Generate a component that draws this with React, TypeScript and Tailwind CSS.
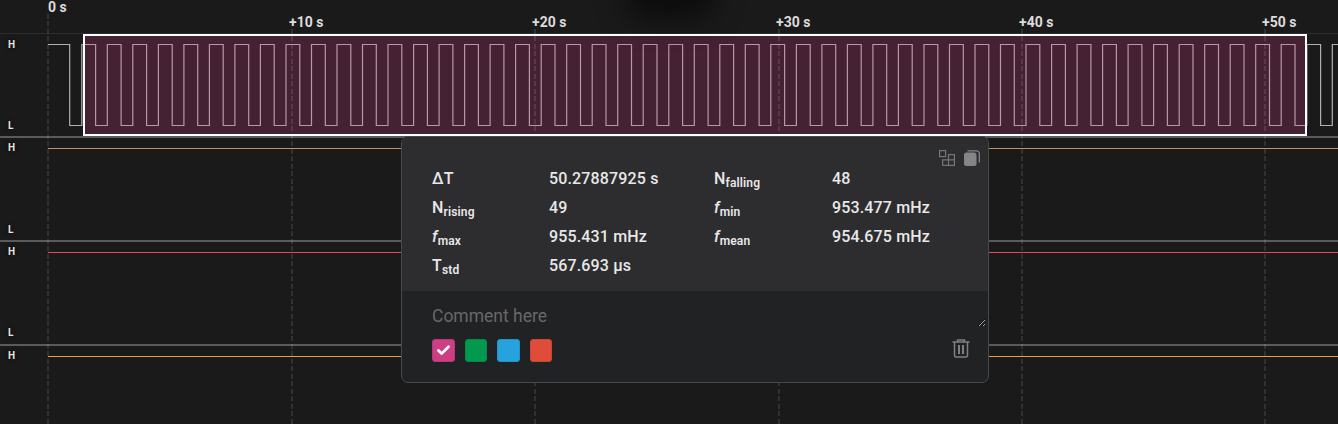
import { Check } from "lucide-react";

const GRID = [
  { x: 48, top: 14, label: "0 s" },
  { x: 292, top: 29, label: "+10 s" },
  { x: 535, top: 29, label: "+20 s" },
  { x: 779, top: 29, label: "+30 s" },
  { x: 1022, top: 29, label: "+40 s" },
  { x: 1265, top: 29, label: "+50 s" },
];

// square wave, coordinates relative to the plot area (starts at x=48)
function wavePath() {
  const hi = 10.5;
  const lo = 91.5;
  const period = 25.52;
  let d = `M0 ${hi} H21.7 V${lo}`;
  for (let i = 0; i < 50; i++) {
    const rise = 33.8 + i * period;
    const fall = 47.6 + i * period;
    d += ` H${rise.toFixed(1)} V${hi} H${fall.toFixed(1)} V${lo}`;
  }
  return d;
}

function Label({ children }: { children: string }) {
  return <span className="text-[10px] leading-[12px] font-bold text-[#e4e4e4] [text-shadow:0_0_4px_#000]">{children}</span>;
}

function Row({ height, lineY, color, low = true, wave = false, pad = "pt-[4px] pb-[5px]", border = true }: { height: string; lineY?: string; color?: string; low?: boolean; wave?: boolean; pad?: string; border?: boolean }) {
  return (
    <div className={`flex w-full ${border ? "border-b-2 border-[#5a5a5e]" : ""} ${height}`}>
      <div className={`flex w-[48px] flex-col justify-between pl-[8px] ${pad}`}>
        <Label>H</Label>
        {low && <Label>L</Label>}
      </div>
      <div className="min-w-0 flex-1">
        {wave ? (
          <svg width="1290" height="102" fill="none">
            <path d={wavePath()} stroke="#b0b0b0" strokeWidth="1.2" />
          </svg>
        ) : (
          <div className={`h-px w-full ${lineY} ${color}`} />
        )}
      </div>
    </div>
  );
}

function Stat({ name, sub, italic, value }: { name: string; sub: string; italic?: boolean; value: string }) {
  return (
    <>
      <div className="flex h-[29px] items-center">
        <span className={`text-[16px] ${italic ? "italic" : ""}`}>{name}</span>
        <span className="mt-[8px] text-[12px] font-semibold leading-none">{sub}</span>
      </div>
      <div className="flex h-[29px] items-center text-[16px]">{value}</div>
    </>
  );
}

function GroupIcon() {
  return (
    <svg width="16" height="16" viewBox="0 0 16 16" fill="none" stroke="#767678" strokeWidth="1.2">
      <rect x="0.6" y="0.6" width="6" height="6" />
      <path d="M3.6 15.4 H15.4 V4.6 H9.5 V15.4 M3.6 15.4 V9.8 H15.4" />
    </svg>
  );
}

function CopyIcon() {
  return (
    <svg width="16" height="16" viewBox="0 0 16 16" fill="none">
      <rect x="0" y="2.5" width="12.5" height="13.5" rx="2.5" fill="#858587" />
      <path d="M3.5 0.8 H12.5 A2.8 2.8 0 0 1 15.3 3.6 V12.5" stroke="#858587" strokeWidth="1.3" />
    </svg>
  );
}

function TrashIcon() {
  return (
    <svg className="-mt-[5px]" width="18" height="19" viewBox="0 0 18 19" fill="none" stroke="#808082" strokeWidth="1.5">
      <path d="M0.5 3 H17.5" />
      <path d="M5.5 3 V1 H12.5 V3" />
      <path d="M2.5 3 V16.5 A1.5 1.5 0 0 0 4 18 H14 A1.5 1.5 0 0 0 15.5 16.5 V3" />
      <path d="M7 6 V15 M11 6 V15" strokeWidth="2" />
    </svg>
  );
}

export default function App() {
  return (
    <div className="relative h-[424px] w-[1338px] overflow-hidden bg-[#1a1a1b] font-['Roboto',sans-serif] text-[#e8e8e8]">
      {/* dark smudge at top */}
      <div className="absolute -top-[30px] left-[625px] h-[50px] w-[90px] rounded-full bg-[#0c0c0c] blur-[14px]" />

      {/* time axis */}
      <div className="h-[34px] border-b border-[#2d2d2f]" />

      <div>
        <Row height="h-[104px]" wave pad="pt-[5px] pb-[4px]" />
        <Row height="h-[104px]" lineY="mt-[10px]" color="bg-[#c98b6e]" pad="pt-[4px] pb-[4px]" />
        <Row height="h-[104px]" lineY="mt-[10px]" color="bg-[#e5485f]" />
        <Row height="h-[78px]" lineY="mt-[10px]" color="bg-[#f39c3d]" low={false} border={false} />
      </div>

      {/* selection */}
      <div className="absolute left-[83px] top-[34px] h-[102px] w-[1224px] border-2 border-white bg-[#da3e8a38]" />

      {/* grid lines and tick labels */}
      {GRID.map((g) => (
        <div key={g.x} className="absolute inset-y-0" style={{ left: g.x }}>
          <div
            className="absolute -left-px bottom-0 w-[2px] bg-[repeating-linear-gradient(to_bottom,rgba(255,255,255,0.1)_0,rgba(255,255,255,0.1)_5px,transparent_5px,transparent_7.5px)]"
            style={{ top: g.top }}
          />
          <span
            className="absolute whitespace-nowrap text-[14px] leading-[14px] font-bold text-[#dcdcdc]"
            style={{ top: g.x === 48 ? 0 : 15, left: g.x === 48 ? 0 : -3 }}
          >
            {g.label}
          </span>
        </div>
      ))}

      {/* measurement popover */}
      <div className="absolute left-[401px] top-[136px] h-[247px] w-[588px] overflow-hidden rounded-[7px] border border-[#48484b] bg-[#212224]">
        <div className="h-[154px] bg-[#2d2d2f]">
          <div className="flex h-[27px] items-start justify-end gap-[9px] pr-[8px] pt-[13px]">
            <GroupIcon />
            <CopyIcon />
          </div>
          <div className="grid grid-cols-[117px_165px_118px_1fr] pl-[30px] font-medium tracking-[0.15px]">
            <Stat name="ΔT" sub="" value="50.27887925 s" />
            <Stat name="N" sub="falling" value="48" />
            <Stat name="N" sub="rising" value="49" />
            <Stat name="f" sub="min" italic value="953.477 mHz" />
            <Stat name="f" sub="max" italic value="955.431 mHz" />
            <Stat name="f" sub="mean" italic value="954.675 mHz" />
            <Stat name="T" sub="std" value="567.693 µs" />
          </div>
        </div>
        <div className="pl-[30px] pr-[2px]">
          <textarea
            placeholder="Comment here"
            className="mt-[13px] block h-[23px] w-full resize bg-transparent pt-[1px] text-[17.5px] leading-[22px] text-[#e8e8e8] outline-none placeholder:text-[#68686a]"
          />
          <div className="mt-[12px] flex items-center pr-[16px]">
            <div className="flex flex-1 gap-[10px]">
              <div className="flex h-[23px] w-[23px] items-center justify-center rounded-[3px] border border-[#b83877] bg-[#cc3f85]">
                <Check size={15} strokeWidth={4.5} color="#fff" />
              </div>
              <div className="h-[23px] w-[22px] rounded-[3px] border border-[#068a48] bg-[#00994d]" />
              <div className="h-[23px] w-[23px] rounded-[3px] border border-[#2394c7] bg-[#26a3dc]" />
              <div className="h-[23px] w-[22px] rounded-[3px] border border-[#c94534] bg-[#df4d3a]" />
            </div>
            <TrashIcon />
          </div>
        </div>
      </div>
    </div>
  );
}
